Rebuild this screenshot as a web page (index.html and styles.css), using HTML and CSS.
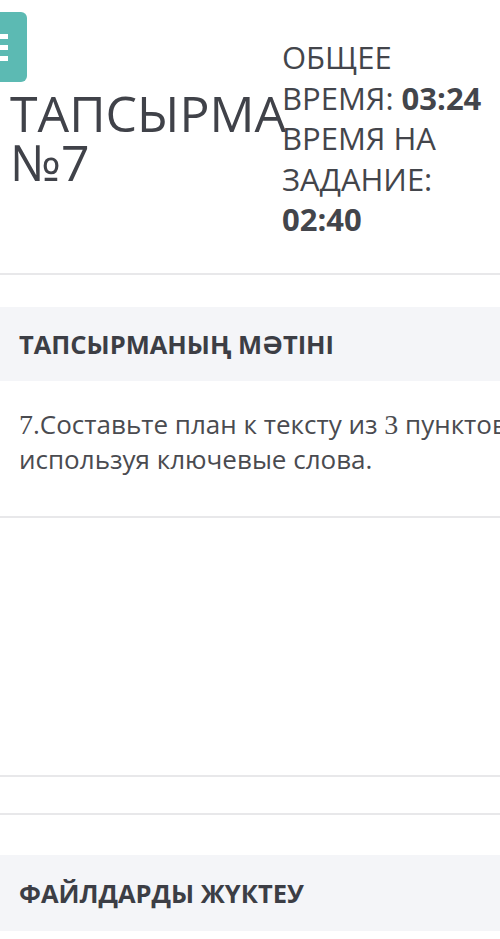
FILE: index.html
```html
<!DOCTYPE html>
<html lang="ru">
<head>
  <meta charset="UTF-8" />
  <meta name="viewport" content="width=device-width, initial-scale=1.0" />
  <link rel="stylesheet" href="styles.css">
</head>
<body>
  <button class="menu-toggle" type="button">
    <span></span><span></span><span></span>
  </button>

  <header class="task-header">
    <h1 class="task-title">ТАПСЫРМА №7</h1>
    <div class="timers">
      <div>ОБЩЕЕ ВРЕМЯ: <b>03:24</b></div>
      <div>ВРЕМЯ НА ЗАДАНИЕ: <b>02:40</b></div>
    </div>
  </header>

  <section class="block">
    <h2 class="block-head">ТАПСЫРМАНЫҢ МӘТІНІ</h2>
    <div class="task-text">
      <p><span class="num">7</span>.Составьте план к тексту из <span class="num">3</span> пунктов,<br>используя ключевые слова.</p>
    </div>
  </section>

  <div class="answer"></div>
  <div class="answer-foot"></div>

  <section class="block upload">
    <h2 class="block-head">ФАЙЛДАРДЫ ЖҮКТЕУ</h2>
  </section>
</body>
</html>
```

FILE: styles.css
```css
html, body {
  overflow-x: hidden;
}

body {
  margin: 0;
  font-family: "Open Sans", sans-serif;
  color: #404249;
  background: #fff;
  position: relative;
}

.menu-toggle {
  position: absolute;
  top: 12px;
  left: -34px;
  width: 61px;
  height: 70px;
  border: none;
  border-radius: 6px;
  background: #5cbab3;
  display: flex;
  flex-direction: column;
  justify-content: center;
  align-items: center;
  gap: 6px;
  padding: 0;
}

.menu-toggle span {
  display: block;
  width: 22px;
  height: 5px;
  background: #fff;
}

.task-header {
  display: flex;
  align-items: center;
  padding: 37px 0 33px;
  border-bottom: 2px solid #e8e8ea;
}

/* the long word is allowed to run under the timers column */
.task-title {
  flex: 0 0 282px;
  min-width: 0;
  box-sizing: border-box;
  margin: 0;
  padding-left: 10px;
  font-size: 50px;
  font-weight: 400;
  line-height: 49px;
}

.timers {
  width: 212px;
  font-size: 31px;
  line-height: 40.5px;
  color: #43454b;
}

.timers b {
  font-weight: 700;
}

.block {
  margin-top: 32px;
}

.block-head {
  margin: 0;
  height: 74px;
  padding: 0 19px;
  display: flex;
  align-items: center;
  background: #f4f5f8;
  font-size: 25.5px;
  font-weight: 700;
  color: #3c3e45;
}

.task-text {
  padding: 26px 0 40px 19px;
  border-bottom: 2px solid #e8e8ea;
}

.task-text p {
  margin: 0;
  font-size: 26px;
  line-height: 34px;
  color: #4a4b50;
  white-space: nowrap;
}

.num {
  font-family: "Liberation Serif", serif;
  font-size: 28px;
}

.answer {
  height: 257px;
  border-bottom: 2px solid #e8e8ea;
}

.answer-foot {
  height: 36px;
  border-bottom: 2px solid #e8e8ea;
}

.upload {
  margin-top: 40px;
}

.upload .block-head {
  height: 76px;
}
```
